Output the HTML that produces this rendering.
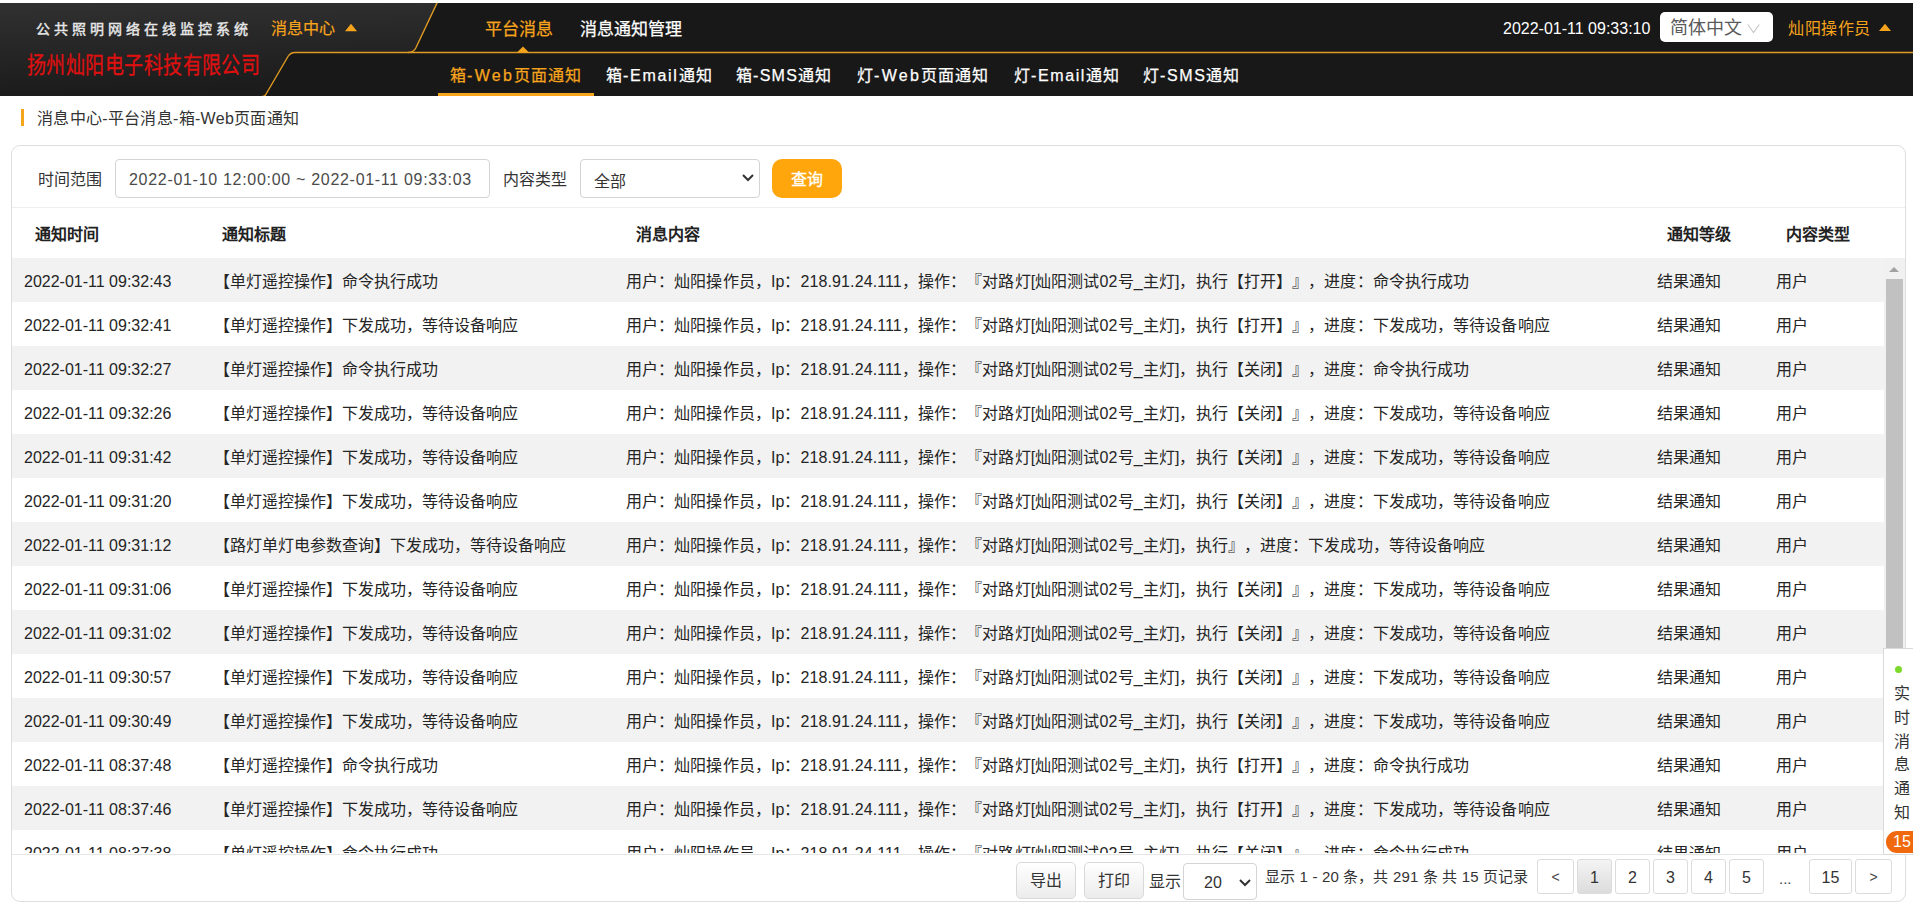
<!DOCTYPE html>
<html lang="zh-CN">
<head>
<meta charset="utf-8">
<style>
*{box-sizing:border-box;margin:0;padding:0}
html,body{width:1913px;height:914px;overflow:hidden;background:#fff}
body{position:relative;font-family:"Liberation Sans",sans-serif;color:#333;text-spacing-trim:space-all}
.abs{position:absolute;white-space:nowrap}
#hdr{position:absolute;left:0;top:3px;width:1913px;height:93px;background:#181818;overflow:hidden}
#hdr svg{position:absolute;left:0;top:0}
.or{color:#f7a41d}
.wh{color:#fff}
.tri{position:absolute;width:0;height:0;border-left:6px solid transparent;border-right:6px solid transparent;border-bottom:7px solid #f7a41d}
.nav1{font-size:17px;line-height:20px;top:20px;-webkit-text-stroke:0.25px currentColor}
.nav2{font-size:16px;line-height:20px;top:66px;letter-spacing:1px;-webkit-text-stroke:0.25px currentColor}
#crumbbar{position:absolute;left:21px;top:109px;width:3px;height:17px;background:#f4a51c}
#panel{position:absolute;left:11px;top:145px;width:1895px;height:757px;border:1px solid #dedede;border-radius:9px;background:#fff}
.lbl{font-size:16px;line-height:20px;color:#333}
.inp{position:absolute;border:1px solid #d4d4d4;border-radius:4px;background:#fff}
#btnq{position:absolute;left:772px;top:159px;width:70px;height:39px;background:#fea60c;border-radius:10px;color:#fff;font-size:16px;line-height:41px;text-align:center;-webkit-text-stroke:0.3px #fff}
.th{position:absolute;top:224px;font-size:16px;line-height:22px;font-weight:bold;color:#222}
#tbody{position:absolute;left:12px;top:258px;width:1872px;height:595px;overflow:hidden}
.row{position:absolute;left:0;width:1872px;height:44px}
.td{position:absolute;top:2px;line-height:44px;font-size:16px;color:#252525;white-space:nowrap}
.td .c{font-size:16px}
.t1{left:12px}.t2{left:202px}.t3{left:614px;letter-spacing:0.1px}.t4{left:1645px}.t5{left:1764px}
#sb{position:absolute;left:1884px;top:258px;width:21px;height:595px;background:#f1f1f1}
#thumb{position:absolute;left:2px;top:21px;width:17px;height:400px;background:#c1c1c1}
#sbup{position:absolute;left:5px;top:9px;width:0;height:0;border-left:5.5px solid transparent;border-right:5.5px solid transparent;border-bottom:5px solid #a3a3a3}
#foot{position:absolute;left:12px;top:854px;width:1893px;height:1px;background:#e6e6e6}
.btn{position:absolute;top:862px;height:37px;border:1px solid #d9d9d9;border-radius:5px;background:linear-gradient(#fff,#ececec);font-size:16px;line-height:35px;text-align:center;color:#333}
.pg{position:absolute;top:859px;height:35px;border:1px solid #dcdcdc;border-radius:3px;background:#fff;font-size:16px;line-height:35px;text-align:center;color:#333}
#float{position:absolute;left:1883px;top:648px;width:40px;height:207px;background:#fff;border:1px solid #dadada;border-right:none}
</style>
</head>
<body>
<div id="hdr">
<svg width="1913" height="93" viewBox="0 0 1913 93">
<defs><linearGradient id="g1" x1="0" y1="0" x2="0.15" y2="1"><stop offset="0" stop-color="#313131"/><stop offset="1" stop-color="#1b1b1b"/></linearGradient></defs>
<path d="M0 0 L437.5 0 L415.8 45 Q413.5 49.5 408.5 49.5 L295 49.5 Q290.5 49.5 288 53.5 L265 93 L0 93 Z" fill="url(#g1)"/>
<path d="M437.5 -1 L415.8 45 Q413.5 49.5 408.5 49.5 L295 49.5 Q290.5 49.5 288 53.5 L265.5 92 Q264.5 93.5 262 93.5" fill="none" stroke="#e09a22" stroke-width="1.4"/>
<path d="M408 49.5 L1913 49.5" fill="none" stroke="#e09a22" stroke-width="1.4"/>
<path d="M517 49.5 L523 43.5 L529 49.5 Z" fill="#f7a41d"/>
</svg>
</div>
<div class="abs" style="left:36px;top:18px;font-size:14px;line-height:22px;color:#e6e6e6;-webkit-text-stroke:0.45px #e6e6e6;letter-spacing:4px">公共照明网络在线监控系统</div>
<div class="abs" style="left:27px;top:50px;font-size:19px;line-height:26px;color:#de1010;-webkit-text-stroke:0.3px #de1010;letter-spacing:0.45px;transform:scaleY(1.22);transform-origin:0 0">扬州灿阳电子科技有限公司</div>
<div class="abs or" style="left:271px;top:18px;font-size:16px;line-height:22px;-webkit-text-stroke:0.2px currentColor">消息中心</div>
<svg class="abs" style="left:345px;top:23px" width="12" height="9" viewBox="0 0 12 9"><path d="M0 8.2 L6 0.8 L12 8.2 Z" fill="#f7a41d"/></svg>
<div class="abs or nav1" style="left:485px">平台消息</div>
<div class="abs wh nav1" style="left:580px">消息通知管理</div>
<div class="abs wh" style="left:1503px;top:19px;font-size:16px;line-height:20px">2022-01-11 09:33:10</div>
<div class="abs" style="left:1660px;top:12px;width:113px;height:30px;background:#fff;border-radius:5px"></div>
<div class="abs" style="left:1670px;top:17px;font-size:18px;line-height:22px;color:#5a5a5a">简体中文</div>
<svg class="abs" style="left:1747px;top:24px" width="14" height="10" viewBox="0 0 14 10"><path d="M0.8 0.5 L6.5 8.5 L12.3 0.5" fill="none" stroke="#c4c4c4" stroke-width="1.1"/></svg>
<div class="abs or" style="left:1788px;top:18px;font-size:16px;line-height:22px;letter-spacing:0.5px">灿阳操作员</div>
<svg class="abs" style="left:1879px;top:23px" width="12" height="9" viewBox="0 0 12 9"><path d="M0 8 L6 0.8 L12 8 Z" fill="#f7a41d"/></svg>

<div class="abs or nav2" style="left:450px">箱<span style="letter-spacing:2.3px">-Web</span>页面通知</div>
<div class="abs" style="left:438px;top:93px;width:156px;height:3px;background:#f7a41d"></div>
<div class="abs wh nav2" style="left:606px">箱<span style="letter-spacing:1.7px">-Email</span>通知</div>
<div class="abs wh nav2" style="left:736px">箱<span style="letter-spacing:1.3px">-SMS</span>通知</div>
<div class="abs wh nav2" style="left:857px">灯<span style="letter-spacing:2.3px">-Web</span>页面通知</div>
<div class="abs wh nav2" style="left:1014px">灯<span style="letter-spacing:1.6px">-Email</span>通知</div>
<div class="abs wh nav2" style="left:1143px">灯<span style="letter-spacing:1.6px">-SMS</span>通知</div>

<div id="crumbbar"></div>
<div class="abs" style="left:37px;top:109px;font-size:16px;line-height:20px;color:#333;letter-spacing:0.3px">消息中心-平台消息-箱-Web页面通知</div>

<div id="panel"></div>
<div class="abs lbl" style="left:38px;top:170px">时间范围</div>
<div class="inp" style="left:115px;top:159px;width:375px;height:39px"></div>
<div class="abs" style="left:129px;top:169px;font-size:16px;line-height:22px;color:#4a4a4a;letter-spacing:0.7px">2022-01-10 12:00:00 ~ 2022-01-11 09:33:03</div>
<div class="abs lbl" style="left:503px;top:170px">内容类型</div>
<div class="inp" style="left:580px;top:159px;width:180px;height:39px"></div>
<div class="abs" style="left:594px;top:171px;font-size:16px;line-height:22px;color:#333">全部</div>
<svg class="abs" style="left:741px;top:173px" width="14" height="10" viewBox="0 0 14 10"><path d="M2 2 L7 7 L12 2" fill="none" stroke="#333" stroke-width="2"/></svg>
<div id="btnq">查询</div>
<div class="abs" style="left:12px;top:207px;width:1893px;height:1px;background:#eeeeee"></div>

<div class="th" style="left:35px">通知时间</div>
<div class="th" style="left:222px">通知标题</div>
<div class="th" style="left:636px">消息内容</div>
<div class="th" style="left:1667px">通知等级</div>
<div class="th" style="left:1786px">内容类型</div>

<div id="tbody">
<div class="row" style="top:0px;background:#f2f2f2"><div class="td t1">2022-01-11 09:32:43</div><div class="td t2"><span class="c">【单灯遥控操作】命令执行成功</span></div><div class="td t3"><span class="c">用户：灿阳操作员，</span>Ip<span class="c">：</span>218.91.24.111<span class="c">，操作：『对路灯</span>[<span class="c">灿阳测试</span>02<span class="c">号</span>_<span class="c">主灯</span>]<span class="c">，执行【打开】』，进度：命令执行成功</span></div><div class="td t4"><span class="c">结果通知</span></div><div class="td t5"><span class="c">用户</span></div></div>
<div class="row" style="top:44px;background:#fff"><div class="td t1">2022-01-11 09:32:41</div><div class="td t2"><span class="c">【单灯遥控操作】下发成功，等待设备响应</span></div><div class="td t3"><span class="c">用户：灿阳操作员，</span>Ip<span class="c">：</span>218.91.24.111<span class="c">，操作：『对路灯</span>[<span class="c">灿阳测试</span>02<span class="c">号</span>_<span class="c">主灯</span>]<span class="c">，执行【打开】』，进度：下发成功，等待设备响应</span></div><div class="td t4"><span class="c">结果通知</span></div><div class="td t5"><span class="c">用户</span></div></div>
<div class="row" style="top:88px;background:#f2f2f2"><div class="td t1">2022-01-11 09:32:27</div><div class="td t2"><span class="c">【单灯遥控操作】命令执行成功</span></div><div class="td t3"><span class="c">用户：灿阳操作员，</span>Ip<span class="c">：</span>218.91.24.111<span class="c">，操作：『对路灯</span>[<span class="c">灿阳测试</span>02<span class="c">号</span>_<span class="c">主灯</span>]<span class="c">，执行【关闭】』，进度：命令执行成功</span></div><div class="td t4"><span class="c">结果通知</span></div><div class="td t5"><span class="c">用户</span></div></div>
<div class="row" style="top:132px;background:#fff"><div class="td t1">2022-01-11 09:32:26</div><div class="td t2"><span class="c">【单灯遥控操作】下发成功，等待设备响应</span></div><div class="td t3"><span class="c">用户：灿阳操作员，</span>Ip<span class="c">：</span>218.91.24.111<span class="c">，操作：『对路灯</span>[<span class="c">灿阳测试</span>02<span class="c">号</span>_<span class="c">主灯</span>]<span class="c">，执行【关闭】』，进度：下发成功，等待设备响应</span></div><div class="td t4"><span class="c">结果通知</span></div><div class="td t5"><span class="c">用户</span></div></div>
<div class="row" style="top:176px;background:#f2f2f2"><div class="td t1">2022-01-11 09:31:42</div><div class="td t2"><span class="c">【单灯遥控操作】下发成功，等待设备响应</span></div><div class="td t3"><span class="c">用户：灿阳操作员，</span>Ip<span class="c">：</span>218.91.24.111<span class="c">，操作：『对路灯</span>[<span class="c">灿阳测试</span>02<span class="c">号</span>_<span class="c">主灯</span>]<span class="c">，执行【关闭】』，进度：下发成功，等待设备响应</span></div><div class="td t4"><span class="c">结果通知</span></div><div class="td t5"><span class="c">用户</span></div></div>
<div class="row" style="top:220px;background:#fff"><div class="td t1">2022-01-11 09:31:20</div><div class="td t2"><span class="c">【单灯遥控操作】下发成功，等待设备响应</span></div><div class="td t3"><span class="c">用户：灿阳操作员，</span>Ip<span class="c">：</span>218.91.24.111<span class="c">，操作：『对路灯</span>[<span class="c">灿阳测试</span>02<span class="c">号</span>_<span class="c">主灯</span>]<span class="c">，执行【关闭】』，进度：下发成功，等待设备响应</span></div><div class="td t4"><span class="c">结果通知</span></div><div class="td t5"><span class="c">用户</span></div></div>
<div class="row" style="top:264px;background:#f2f2f2"><div class="td t1">2022-01-11 09:31:12</div><div class="td t2"><span class="c">【路灯单灯电参数查询】下发成功，等待设备响应</span></div><div class="td t3"><span class="c">用户：灿阳操作员，</span>Ip<span class="c">：</span>218.91.24.111<span class="c">，操作：『对路灯</span>[<span class="c">灿阳测试</span>02<span class="c">号</span>_<span class="c">主灯</span>]<span class="c">，执行』，进度：下发成功，等待设备响应</span></div><div class="td t4"><span class="c">结果通知</span></div><div class="td t5"><span class="c">用户</span></div></div>
<div class="row" style="top:308px;background:#fff"><div class="td t1">2022-01-11 09:31:06</div><div class="td t2"><span class="c">【单灯遥控操作】下发成功，等待设备响应</span></div><div class="td t3"><span class="c">用户：灿阳操作员，</span>Ip<span class="c">：</span>218.91.24.111<span class="c">，操作：『对路灯</span>[<span class="c">灿阳测试</span>02<span class="c">号</span>_<span class="c">主灯</span>]<span class="c">，执行【关闭】』，进度：下发成功，等待设备响应</span></div><div class="td t4"><span class="c">结果通知</span></div><div class="td t5"><span class="c">用户</span></div></div>
<div class="row" style="top:352px;background:#f2f2f2"><div class="td t1">2022-01-11 09:31:02</div><div class="td t2"><span class="c">【单灯遥控操作】下发成功，等待设备响应</span></div><div class="td t3"><span class="c">用户：灿阳操作员，</span>Ip<span class="c">：</span>218.91.24.111<span class="c">，操作：『对路灯</span>[<span class="c">灿阳测试</span>02<span class="c">号</span>_<span class="c">主灯</span>]<span class="c">，执行【关闭】』，进度：下发成功，等待设备响应</span></div><div class="td t4"><span class="c">结果通知</span></div><div class="td t5"><span class="c">用户</span></div></div>
<div class="row" style="top:396px;background:#fff"><div class="td t1">2022-01-11 09:30:57</div><div class="td t2"><span class="c">【单灯遥控操作】下发成功，等待设备响应</span></div><div class="td t3"><span class="c">用户：灿阳操作员，</span>Ip<span class="c">：</span>218.91.24.111<span class="c">，操作：『对路灯</span>[<span class="c">灿阳测试</span>02<span class="c">号</span>_<span class="c">主灯</span>]<span class="c">，执行【关闭】』，进度：下发成功，等待设备响应</span></div><div class="td t4"><span class="c">结果通知</span></div><div class="td t5"><span class="c">用户</span></div></div>
<div class="row" style="top:440px;background:#f2f2f2"><div class="td t1">2022-01-11 09:30:49</div><div class="td t2"><span class="c">【单灯遥控操作】下发成功，等待设备响应</span></div><div class="td t3"><span class="c">用户：灿阳操作员，</span>Ip<span class="c">：</span>218.91.24.111<span class="c">，操作：『对路灯</span>[<span class="c">灿阳测试</span>02<span class="c">号</span>_<span class="c">主灯</span>]<span class="c">，执行【关闭】』，进度：下发成功，等待设备响应</span></div><div class="td t4"><span class="c">结果通知</span></div><div class="td t5"><span class="c">用户</span></div></div>
<div class="row" style="top:484px;background:#fff"><div class="td t1">2022-01-11 08:37:48</div><div class="td t2"><span class="c">【单灯遥控操作】命令执行成功</span></div><div class="td t3"><span class="c">用户：灿阳操作员，</span>Ip<span class="c">：</span>218.91.24.111<span class="c">，操作：『对路灯</span>[<span class="c">灿阳测试</span>02<span class="c">号</span>_<span class="c">主灯</span>]<span class="c">，执行【打开】』，进度：命令执行成功</span></div><div class="td t4"><span class="c">结果通知</span></div><div class="td t5"><span class="c">用户</span></div></div>
<div class="row" style="top:528px;background:#f2f2f2"><div class="td t1">2022-01-11 08:37:46</div><div class="td t2"><span class="c">【单灯遥控操作】下发成功，等待设备响应</span></div><div class="td t3"><span class="c">用户：灿阳操作员，</span>Ip<span class="c">：</span>218.91.24.111<span class="c">，操作：『对路灯</span>[<span class="c">灿阳测试</span>02<span class="c">号</span>_<span class="c">主灯</span>]<span class="c">，执行【打开】』，进度：下发成功，等待设备响应</span></div><div class="td t4"><span class="c">结果通知</span></div><div class="td t5"><span class="c">用户</span></div></div>
<div class="row" style="top:572px;background:#fff"><div class="td t1">2022-01-11 08:37:38</div><div class="td t2"><span class="c">【单灯遥控操作】命令执行成功</span></div><div class="td t3"><span class="c">用户：灿阳操作员，</span>Ip<span class="c">：</span>218.91.24.111<span class="c">，操作：『对路灯</span>[<span class="c">灿阳测试</span>02<span class="c">号</span>_<span class="c">主灯</span>]<span class="c">，执行【关闭】』，进度：命令执行成功</span></div><div class="td t4"><span class="c">结果通知</span></div><div class="td t5"><span class="c">用户</span></div></div>
</div>
<div id="sb"><div id="sbup"></div><div id="thumb"></div></div>

<div id="foot"></div>
<div class="btn" style="left:1016px;width:60px">导出</div>
<div class="btn" style="left:1084px;width:60px">打印</div>
<div class="abs" style="left:1149px;top:872px;font-size:16px;line-height:20px;color:#333">显示</div>
<div class="inp" style="left:1183px;top:863px;width:74px;height:37px"></div>
<div class="abs" style="left:1204px;top:872px;font-size:16px;line-height:22px;color:#333">20</div>
<svg class="abs" style="left:1238px;top:878px" width="14" height="10" viewBox="0 0 14 10"><path d="M2 2 L7 7 L12 2" fill="none" stroke="#333" stroke-width="2"/></svg>
<div class="abs" style="left:1265px;top:866px;font-size:15px;line-height:22px;color:#333;letter-spacing:0.15px">显示 1 - 20 条，共 291 条 共 15 页记录</div>
<div class="pg" style="left:1537px;width:37px;font-size:14px;color:#444">&lt;</div>
<div class="pg" style="left:1577px;width:35px;background:linear-gradient(#f4f4f4,#dcdcdc)">1</div>
<div class="pg" style="left:1615px;width:35px">2</div>
<div class="pg" style="left:1653px;width:35px">3</div>
<div class="pg" style="left:1691px;width:35px">4</div>
<div class="pg" style="left:1729px;width:35px">5</div>
<div class="abs" style="left:1779px;top:868px;font-size:15px;line-height:22px;color:#444">...</div>
<div class="pg" style="left:1809px;width:43px">15</div>
<div class="pg" style="left:1855px;width:37px;font-size:14px;color:#444">&gt;</div>

<div id="float">
<div style="position:absolute;left:11px;top:17px;width:7px;height:7px;border-radius:50%;background:#7ad92a"></div>
<div style="position:absolute;left:10px;top:33px;font-size:16px;line-height:23.8px;color:#333;width:20px;white-space:normal;word-break:break-all">实时消息通知</div>
<div style="position:absolute;left:2px;top:182px;width:40px;height:22px;border-radius:11px;background:#f0690f;color:#fff;font-size:16px;line-height:22px;padding-left:7px">15</div>
</div>
</body>
</html>
